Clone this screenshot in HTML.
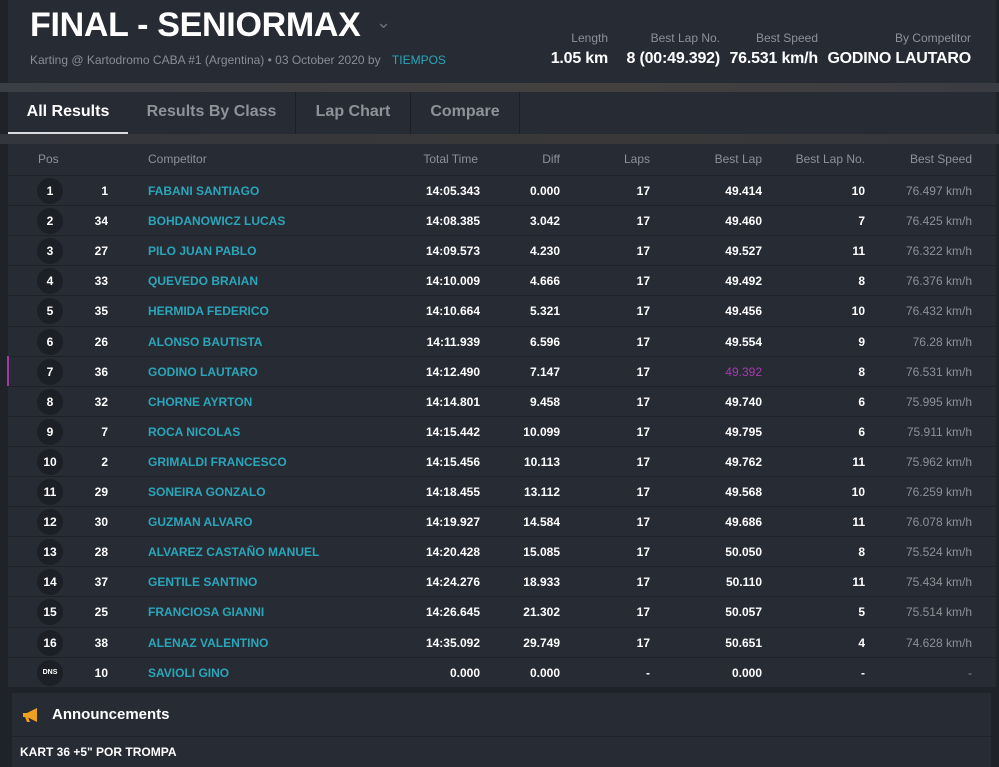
<!DOCTYPE html>
<html><head><meta charset="utf-8"><style>
*{margin:0;padding:0;box-sizing:border-box}
body{width:999px;height:767px;overflow:hidden;background:#1f2228;font-family:"Liberation Sans",Arial,sans-serif;position:relative}
.hdr{position:absolute;left:8px;top:0;width:988px;height:83px;background:#272b34}
.band{position:absolute;left:0;top:83px;width:999px;height:9px;background:linear-gradient(90deg,#3a3e45,#44403f 60%,#3a3c43)}
.band2{position:absolute;left:0;top:134px;width:999px;height:10px;background:linear-gradient(90deg,#33363d,#3a3838 60%,#33363d)}
h1{position:absolute;left:30px;top:6px;font-size:34px;color:#fff;font-weight:bold;letter-spacing:-0.3px}
.chev{position:absolute;left:376px;top:12px;color:#6a6e76;font-size:18px}
.sub{position:absolute;left:30px;top:53px;font-size:12px;color:#8a8e96}
.sub b{color:#2aa6ba;font-weight:normal;margin-left:8px}
.st{position:absolute;top:31px;text-align:right}
.st .l{font-size:12px;color:#8d9198}
.st .v{font-size:16px;color:#fff;font-weight:bold;margin-top:5px;letter-spacing:-0.2px}
.tabs{position:absolute;left:8px;top:92px;width:988px;height:42px;background:#272b34}
.tab{position:absolute;top:0;height:42px;line-height:40px;text-align:center;font-size:16px;font-weight:bold;color:#8e9299;border-right:1px solid #1c1f25}
.tab.a{color:#fff;border-bottom:2px solid #d8dadd;border-right:none}
.tbl{position:absolute;left:8px;top:144px;width:988px;height:543px;background:#272b34}
.row{position:absolute;left:0;width:988px;height:30px;border-top:1px solid #1e2127;font-size:12px;font-weight:bold;color:#fff}
.row div{position:absolute;top:0;line-height:30px}
.hrow{font-weight:normal;color:#8d9198;border-top:none}
.c{width:26px;height:26px;border-radius:50%;background:#1c1f25;left:29px;top:2px!important;line-height:26px!important;text-align:center}
.r{text-align:right}
.nm{left:140px;color:#2aa6ba}
.ann{position:absolute;left:12px;top:693px;width:979px;height:74px;background:#272b34}
.ann .t{position:absolute;left:40px;top:13px;font-size:15px;font-weight:bold;color:#fff}
.ann .ln{position:absolute;left:0;top:43px;width:979px;border-top:1px solid #1e2127}
.ann .k{position:absolute;left:8px;top:52px;font-size:12px;font-weight:bold;color:#fff}
.side{position:absolute;left:7px;width:2px;height:30px;background:#a03aa8}
</style></head><body>
<div class="hdr"></div>
<h1>FINAL - SENIORMAX</h1><div class="chev">&#8964;</div>
<div class="sub">Karting @ Kartodromo CABA #1 (Argentina) • 03 October 2020 by <b>TIEMPOS</b></div>
<div class="st" style="right:391px"><div class="l">Length</div><div class="v">1.05 km</div></div>
<div class="st" style="right:279px"><div class="l">Best Lap No.</div><div class="v">8 (00:49.392)</div></div>
<div class="st" style="right:181px"><div class="l">Best Speed</div><div class="v">76.531 km/h</div></div>
<div class="st" style="right:28px"><div class="l">By Competitor</div><div class="v">GODINO LAUTARO</div></div>
<div class="band"></div>
<div class="tabs">
<div class="tab a" style="left:0;width:120px">All Results</div>
<div class="tab" style="left:120px;width:168px">Results By Class</div>
<div class="tab" style="left:288px;width:115px">Lap Chart</div>
<div class="tab" style="left:403px;width:109px">Compare</div>
</div>
<div class="band2"></div>
<div class="tbl" id="t">
<div class="row hrow" style="top:0;height:31px"><div style="left:30px;line-height:31px">Pos</div><div style="left:140px;line-height:31px">Competitor</div><div class="r" style="right:518px;line-height:31px">Total Time</div><div class="r" style="right:436px;line-height:31px">Diff</div><div class="r" style="right:346px;line-height:31px">Laps</div><div class="r" style="right:234px;line-height:31px">Best Lap</div><div class="r" style="right:131px;line-height:31px">Best Lap No.</div><div class="r" style="right:24px;line-height:31px">Best Speed</div></div>
</div>
<div class="side" style="top:356px"></div>
<div class="ann"><svg style="position:absolute;left:9px;top:14px" width="20" height="16" viewBox="0 0 20 16"><path d="M2 6h4l10-5v14L6 10H2z" fill="#f0a020"/><path d="M4 10l2 5h3l-2-5z" fill="#f0a020"/></svg><div class="t">Announcements</div><div class="ln"></div><div class="k">KART 36 +5" POR TROMPA</div></div>
<script>
var d=[["1","1","FABANI SANTIAGO","14:05.343","0.000","17","49.414","10","76.497 km/h"],
["2","34","BOHDANOWICZ LUCAS","14:08.385","3.042","17","49.460","7","76.425 km/h"],
["3","27","PILO JUAN PABLO","14:09.573","4.230","17","49.527","11","76.322 km/h"],
["4","33","QUEVEDO BRAIAN","14:10.009","4.666","17","49.492","8","76.376 km/h"],
["5","35","HERMIDA FEDERICO","14:10.664","5.321","17","49.456","10","76.432 km/h"],
["6","26","ALONSO BAUTISTA","14:11.939","6.596","17","49.554","9","76.28 km/h"],
["7","36","GODINO LAUTARO","14:12.490","7.147","17","49.392","8","76.531 km/h"],
["8","32","CHORNE AYRTON","14:14.801","9.458","17","49.740","6","75.995 km/h"],
["9","7","ROCA NICOLAS","14:15.442","10.099","17","49.795","6","75.911 km/h"],
["10","2","GRIMALDI FRANCESCO","14:15.456","10.113","17","49.762","11","75.962 km/h"],
["11","29","SONEIRA GONZALO","14:18.455","13.112","17","49.568","10","76.259 km/h"],
["12","30","GUZMAN ALVARO","14:19.927","14.584","17","49.686","11","76.078 km/h"],
["13","28","ALVAREZ CASTAÑO MANUEL","14:20.428","15.085","17","50.050","8","75.524 km/h"],
["14","37","GENTILE SANTINO","14:24.276","18.933","17","50.110","11","75.434 km/h"],
["15","25","FRANCIOSA GIANNI","14:26.645","21.302","17","50.057","5","75.514 km/h"],
["16","38","ALENAZ VALENTINO","14:35.092","29.749","17","50.651","4","74.628 km/h"],
["DNS","10","SAVIOLI GINO","0.000","0.000","-","0.000","-","-"]];
var h="";d.forEach(function(r,i){var top=31+i*30.1;
h+='<div class="row" style="top:'+top+'px"><div class="c"'+(r[0]=="DNS"?' style="font-size:7px"':'')+'>'+r[0]+'</div><div class="r" style="right:888px">'+r[1]+'</div><div class="nm">'+r[2]+'</div><div class="r" style="right:516px">'+r[3]+'</div><div class="r" style="right:436px">'+r[4]+'</div><div class="r" style="right:346px">'+r[5]+'</div><div class="r" style="right:234px'+(i==6?';color:#a83ab0;font-weight:normal':'')+'">'+r[6]+'</div><div class="r" style="right:131px">'+r[7]+'</div><div class="r" style="right:24px;color:#8d9198;font-weight:normal">'+r[8]+'</div></div>';});
document.getElementById("t").innerHTML+=h;
</script>
</body></html>
